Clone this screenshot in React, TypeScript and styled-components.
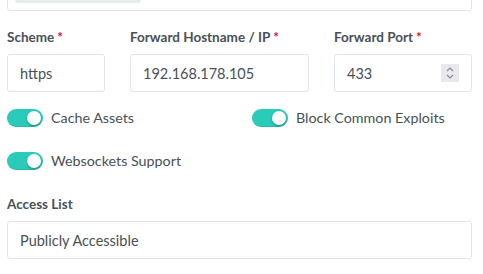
import React from "react";
import styled, { createGlobalStyle } from "styled-components";

const Global = createGlobalStyle`
  html, body { margin: 0; padding: 0; background: #fff; }
  body { font-family: "Lato", "Noto Sans", sans-serif; color: #495057; }
  * { box-sizing: border-box; }
`;

const Page = styled.div`
  width: 483px;
  height: 274px;
  overflow: hidden;
  padding: 0 11px 0 7px;
`;

const TopField = styled.div`
  position: relative;
  height: 38px;
  margin-top: -27px;
  border: 1px solid #e0e5ec;
  border-radius: 3px;
`;

const Chip = styled.div`
  position: absolute;
  left: 7px;
  top: 7px;
  width: 126px;
  height: 22px;
  background: #e9ecef;
  border-radius: 3px;
`;

const Group = styled.div`
  margin-top: 16px;
`;

const ThreeCols = styled.div`
  display: grid;
  grid-template-columns: 98px 179px 138px;
  column-gap: 25px;
  margin-top: 16px;
`;

const Label = styled.label`
  display: block;
  font-size: 13.5px;
  font-weight: 700;
  line-height: 21px;
  margin-bottom: 6px;
  color: #495057;
`;

const Req = styled.span`
  color: #cd201f;
  margin-left: 3px;
`;

const Field = styled.div`
  position: relative;
  height: 38px;
  border: 1px solid #e0e5ec;
  border-radius: 3px;
  padding: 0 12px;
  display: flex;
  align-items: center;
  font-size: 14.5px;
  color: #495057;
`;

const Spinner = styled.div`
  position: absolute;
  right: 12px;
  top: 9px;
  width: 18px;
  height: 18px;
  background: #e9e9ed;
  display: flex;
  align-items: center;
  justify-content: center;
`;

const ToggleGrid = styled.div`
  display: grid;
  grid-template-columns: 245px 1fr;
  margin-top: 16px;
`;

const ToggleRow = styled.div<{ $mb?: number }>`
  display: flex;
  align-items: flex-start;
  height: 27px;
  margin-bottom: ${(p) => p.$mb ?? 0}px;
`;

const Switch = styled.span`
  position: relative;
  width: 36px;
  height: 18px;
  margin-top: 1px;
  border-radius: 9px;
  background: #2bcbba;
  box-shadow: inset 0 -1px 0 rgba(0, 0, 0, 0.08);
  flex: none;
`;

const Knob = styled.span`
  position: absolute;
  right: 2px;
  top: 2px;
  width: 14px;
  height: 14px;
  border-radius: 50%;
  background: #fff;
  box-shadow: 0 1px 2px rgba(0, 0, 0, 0.35);
`;

const ToggleText = styled.span`
  margin-left: 8px;
  font-size: 14.3px;
  line-height: 20px;
  color: #495057;
`;

const Toggle = ({ label }: { label: string }) => (
  <>
    <Switch>
      <Knob />
    </Switch>
    <ToggleText>{label}</ToggleText>
  </>
);

export default function App() {
  return (
    <>
      <Global />
      <Page>
        <TopField>
          <Chip />
        </TopField>
        <ThreeCols>
          <div>
            <Label>
              Scheme<Req>*</Req>
            </Label>
            <Field>https</Field>
          </div>
          <div>
            <Label>
              Forward Hostname / IP<Req>*</Req>
            </Label>
            <Field>192.168.178.105</Field>
          </div>
          <div>
            <Label>
              Forward Port<Req>*</Req>
            </Label>
            <Field>
              433
              <Spinner>
                <svg width="10" height="14" viewBox="0 0 10 14">
                  <path d="M2 5 L5 2 L8 5" fill="none" stroke="#8a8a90" strokeWidth="1.2" />
                  <path d="M2 9 L5 12 L8 9" fill="none" stroke="#8a8a90" strokeWidth="1.2" />
                </svg>
              </Spinner>
            </Field>
          </div>
        </ThreeCols>
        <ToggleGrid>
          <ToggleRow $mb={16}>
            <Toggle label="Cache Assets" />
          </ToggleRow>
          <ToggleRow $mb={16}>
            <Toggle label="Block Common Exploits" />
          </ToggleRow>
          <ToggleRow>
            <Toggle label="Websockets Support" />
          </ToggleRow>
        </ToggleGrid>
        <Group>
          <Label>Access List</Label>
          <Field>Publicly Accessible</Field>
        </Group>
      </Page>
    </>
  );
}
